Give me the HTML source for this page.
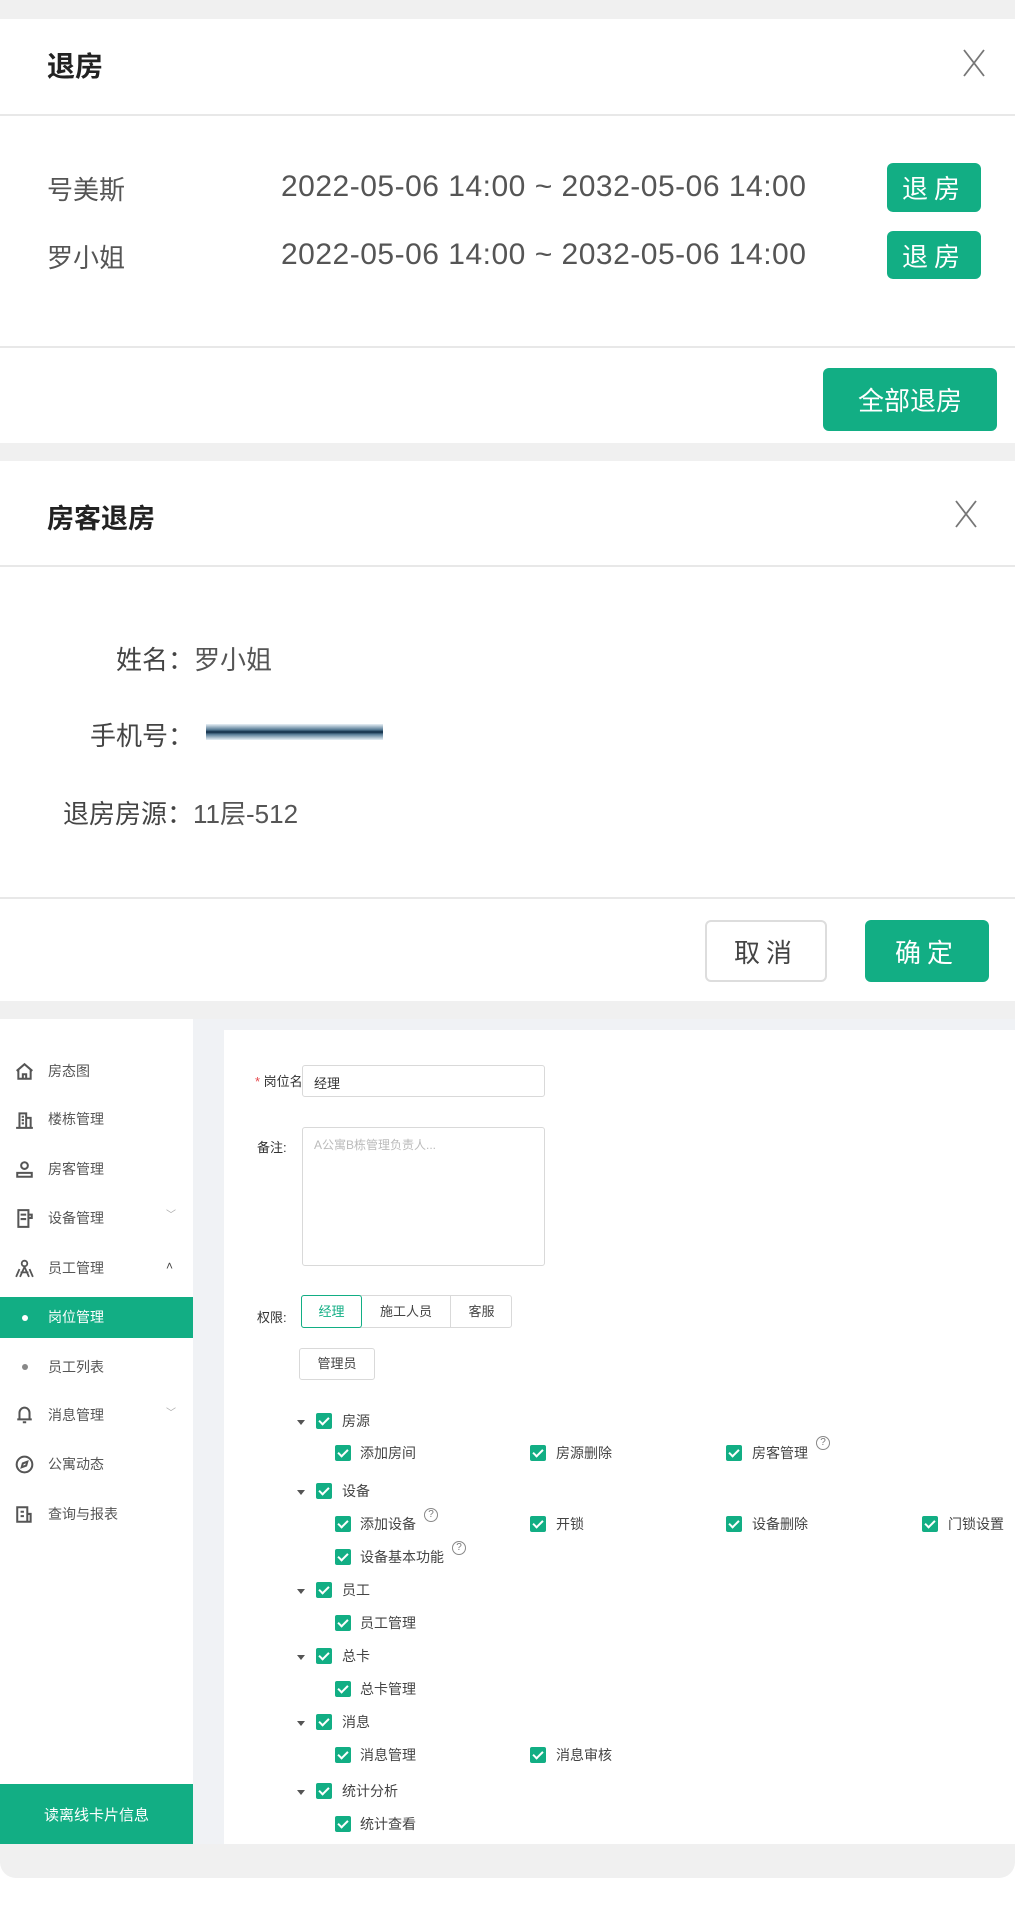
<!DOCTYPE html>
<html><head><meta charset="utf-8"><style>
*{margin:0;padding:0;box-sizing:border-box}
body{width:1015px;height:1920px;background:#fff;font-family:"Liberation Sans","Noto Sans CJK SC",sans-serif;position:relative;overflow:hidden;color:#333}
.a{position:absolute}
.g{background:#f0f0f0}
.btn{position:absolute;background:#12ae84;color:#fff;border-radius:6px;display:flex;align-items:center;justify-content:center}
.x{position:absolute;width:22px;height:28px}
.hl{position:absolute;left:0;width:1015px;height:2px;background:#e8e8e8}
.mi{position:absolute;left:48px;font-size:14px;color:#555;line-height:20px}
.ic{position:absolute;left:15px;width:19px;height:19px}
.cb{position:absolute;width:16px;height:16px;background:#12ae84;border-radius:2px}
.cb:after{content:"";position:absolute;left:5px;top:2px;width:4px;height:8px;border:solid #fff;border-width:0 2px 2px 0;transform:rotate(45deg)}
.lb{position:absolute;font-size:14px;color:#444;line-height:16px}
.tri{position:absolute;width:0;height:0;border-left:4px solid transparent;border-right:4px solid transparent;border-top:5px solid #555}
.q{position:absolute;width:14px;height:14px;border:1px solid #888;border-radius:50%;font-size:10px;color:#777;text-align:center;line-height:12px}
.d{position:absolute;left:281px;font-size:30px;color:#555;white-space:nowrap;letter-spacing:0.5px}
</style></head><body>
<div class="a g" style="left:0;top:0;width:1015px;height:19px"></div>
<div class="a" style="left:0;top:19px;width:1015px;height:424px;background:#fff;border-radius:14px 14px 0 0"></div>
<div class="a" style="left:47px;top:45px;font-size:28px;font-weight:bold;color:#222">退房</div>
<svg class="x" style="left:963px;top:49px" viewBox="0 0 22 28" stroke="#777" stroke-width="1.8"><path d="M1 1L21 27M21 1L1 27"/></svg>
<div class="hl" style="top:114px"></div>
<div class="a" style="left:47px;top:170px;font-size:26px;color:#555">号美斯</div>
<div class="d" style="top:170px">2022-05-06 14:00 ~ 2032-05-06 14:00</div>
<div class="btn" style="left:887px;top:163px;width:94px;height:49px;font-size:26px;letter-spacing:6px">退房</div>
<div class="a" style="left:47px;top:238px;font-size:26px;color:#555">罗小姐</div>
<div class="d" style="top:238px">2022-05-06 14:00 ~ 2032-05-06 14:00</div>
<div class="btn" style="left:887px;top:231px;width:94px;height:48px;font-size:26px;letter-spacing:6px">退房</div>
<div class="hl" style="top:346px"></div>
<div class="btn" style="left:823px;top:368px;width:174px;height:63px;font-size:26px">全部退房</div>
<div class="a g" style="left:0;top:443px;width:1015px;height:18px"></div>

<div class="a" style="left:47px;top:497px;font-size:27px;font-weight:bold;color:#222">房客退房</div>
<svg class="x" style="left:955px;top:500px" viewBox="0 0 22 28" stroke="#777" stroke-width="1.8"><path d="M1 1L21 27M21 1L1 27"/></svg>
<div class="hl" style="top:565px"></div>
<div class="a" style="left:116px;top:640px;font-size:26px;color:#444">姓名：<span style="color:#555">罗小姐</span></div>
<div class="a" style="left:90px;top:716px;font-size:26px;color:#444">手机号：</div>
<div class="a" style="left:206px;top:724px;width:177px;height:16px;background:linear-gradient(#e8f0f6,#5a7e98 35%,#0d2a44 50%,#5a7e98 65%,#e8f0f6)"></div>
<div class="a" style="left:63px;top:794px;font-size:26px;color:#444">退房房源：<span style="color:#555">11层-512</span></div>
<div class="hl" style="top:897px"></div>
<div class="a" style="left:705px;top:920px;width:122px;height:62px;border:2px solid #ddd;border-radius:6px;font-size:26px;color:#444;display:flex;align-items:center;justify-content:center;letter-spacing:6px">取消</div>
<div class="btn" style="left:865px;top:920px;width:124px;height:62px;font-size:26px;letter-spacing:6px">确定</div>
<div class="a g" style="left:0;top:1001px;width:1015px;height:18px"></div>

<div class="a" style="left:193px;top:1019px;width:822px;height:825px;background:#f0f2f5"></div>
<div class="a" style="left:0;top:1019px;width:193px;height:825px;background:#fff"></div>
<div class="a" style="left:224px;top:1030px;width:791px;height:814px;background:#fff"></div>

<svg class="ic" style="top:1062px" viewBox="0 0 17 17" fill="none" stroke="#555" stroke-width="1.8"><path d="M1.5 8L8.5 2 15.5 8M3 6.5v8.5h11V6.5M7 15v-4h3v4"/></svg>
<div class="mi" style="top:1061px">房态图</div>
<svg class="ic" style="top:1110px" viewBox="0 0 17 17" fill="none" stroke="#555" stroke-width="1.8"><path d="M1 16h15M4 16V3h6v13M10 7h4v9M6 6h2M6 9h2M6 12h2"/></svg>
<div class="mi" style="top:1109px">楼栋管理</div>
<svg class="ic" style="top:1160px" viewBox="0 0 17 17" fill="none" stroke="#555" stroke-width="1.8"><circle cx="8.5" cy="5" r="3"/><path d="M2 15v-3.5h13V15z"/></svg>
<div class="mi" style="top:1159px">房客管理</div>
<svg class="ic" style="top:1209px" viewBox="0 0 17 17" fill="none" stroke="#555" stroke-width="1.8"><path d="M3 1h9v15H3zM5 5h5M5 9h5M12 5h3v3h-3"/></svg>
<div class="mi" style="top:1208px">设备管理</div>
<div class="a" style="left:166px;top:1206px;font-size:10px;color:#aaa">﹀</div>
<svg class="ic" style="top:1259px" viewBox="0 0 17 17" fill="none" stroke="#555" stroke-width="1.6"><circle cx="8.5" cy="4" r="2.5"/><path d="M4 9l-3 7M13 9l3 7M8.5 7l-4 9M8.5 7l4 9M5 12h7"/></svg>
<div class="mi" style="top:1258px">员工管理</div>
<div class="a" style="left:166px;top:1259px;font-size:12px;color:#444">˄</div>
<div class="a" style="left:0;top:1297px;width:193px;height:41px;background:#12ae84"></div>
<div class="a" style="left:22px;top:1315px;width:6px;height:6px;border-radius:50%;background:#fff"></div>
<div class="mi" style="top:1307px;color:#fff">岗位管理</div>
<div class="a" style="left:22px;top:1364px;width:6px;height:6px;border-radius:50%;background:#888"></div>
<div class="mi" style="top:1357px">员工列表</div>
<svg class="ic" style="top:1406px" viewBox="0 0 17 17" fill="none" stroke="#555" stroke-width="1.8"><path d="M4 12V6a4.5 4.5 0 019 0v6M2 12h13M7 14.5h3"/></svg>
<div class="mi" style="top:1405px">消息管理</div>
<div class="a" style="left:166px;top:1404px;font-size:10px;color:#aaa">﹀</div>
<svg class="ic" style="top:1455px" viewBox="0 0 17 17" fill="none" stroke="#555" stroke-width="1.8"><circle cx="8.5" cy="8.5" r="7"/><path d="M11 6l-4 1.5L6 11l4-1.5z"/></svg>
<div class="mi" style="top:1454px">公寓动态</div>
<svg class="ic" style="top:1505px" viewBox="0 0 17 17" fill="none" stroke="#555" stroke-width="1.8"><path d="M2 2h9v13H2zM5 6h3M5 10h3M11 8h3v7h-3"/></svg>
<div class="mi" style="top:1504px">查询与报表</div>
<div class="a" style="left:0;top:1784px;width:193px;height:60px;background:#12ae84;color:#fff;font-size:15px;display:flex;align-items:center;justify-content:center">读离线卡片信息</div>
<div class="a g" style="left:0;top:1844px;width:1015px;height:34px;border-radius:0 0 16px 16px"></div>

<div class="a" style="left:255px;top:1071px;font-size:13px;color:#333"><span style="color:#e5484d">*</span> 岗位名</div>
<div class="a" style="left:302px;top:1065px;width:243px;height:32px;border:1px solid #d9d9d9;border-radius:3px;background:#fff;font-size:13px;color:#333;padding:7px 11px">经理</div>
<div class="a" style="left:257px;top:1137px;font-size:13px;color:#333">备注:</div>
<div class="a" style="left:302px;top:1127px;width:243px;height:139px;border:1px solid #d9d9d9;border-radius:3px;font-size:12px;color:#bbb;padding:8px 11px">A公寓B栋管理负责人...</div>
<div class="a" style="left:257px;top:1307px;font-size:13px;color:#333">权限:</div>
<div class="a" style="left:301px;top:1295px;width:211px;height:33px;border:1px solid #d9d9d9;border-radius:3px"></div>
<div class="a" style="left:301px;top:1295px;width:61px;height:33px;border:1px solid #12ae84;border-radius:3px;color:#12ae84;font-size:13px;text-align:center;line-height:31px">经理</div>
<div class="a" style="left:362px;top:1295px;width:89px;height:33px;border-right:1px solid #d9d9d9;font-size:13px;color:#444;text-align:center;line-height:33px">施工人员</div>
<div class="a" style="left:451px;top:1295px;width:61px;height:33px;font-size:13px;color:#444;text-align:center;line-height:33px">客服</div>
<div class="a" style="left:299px;top:1348px;width:76px;height:32px;border:1px solid #d9d9d9;border-radius:3px;font-size:13px;color:#444;text-align:center;line-height:30px">管理员</div>

<div class="tri" style="left:297px;top:1420px"></div><div class="cb" style="left:316px;top:1413px"></div><div class="lb" style="left:342px;top:1413px">房源</div>
<div class="cb" style="left:335px;top:1445px"></div><div class="lb" style="left:360px;top:1445px">添加房间</div>
<div class="cb" style="left:530px;top:1445px"></div><div class="lb" style="left:556px;top:1445px">房源删除</div>
<div class="cb" style="left:726px;top:1445px"></div><div class="lb" style="left:752px;top:1445px">房客管理</div><div class="q" style="left:816px;top:1436px">?</div>
<div class="tri" style="left:297px;top:1490px"></div><div class="cb" style="left:316px;top:1483px"></div><div class="lb" style="left:342px;top:1483px">设备</div>
<div class="cb" style="left:335px;top:1516px"></div><div class="lb" style="left:360px;top:1516px">添加设备</div><div class="q" style="left:424px;top:1508px">?</div>
<div class="cb" style="left:530px;top:1516px"></div><div class="lb" style="left:556px;top:1516px">开锁</div>
<div class="cb" style="left:726px;top:1516px"></div><div class="lb" style="left:752px;top:1516px">设备删除</div>
<div class="cb" style="left:922px;top:1516px"></div><div class="lb" style="left:948px;top:1516px">门锁设置</div>
<div class="cb" style="left:335px;top:1549px"></div><div class="lb" style="left:360px;top:1549px">设备基本功能</div><div class="q" style="left:452px;top:1541px">?</div>
<div class="tri" style="left:297px;top:1589px"></div><div class="cb" style="left:316px;top:1582px"></div><div class="lb" style="left:342px;top:1582px">员工</div>
<div class="cb" style="left:335px;top:1615px"></div><div class="lb" style="left:360px;top:1615px">员工管理</div>
<div class="tri" style="left:297px;top:1655px"></div><div class="cb" style="left:316px;top:1648px"></div><div class="lb" style="left:342px;top:1648px">总卡</div>
<div class="cb" style="left:335px;top:1681px"></div><div class="lb" style="left:360px;top:1681px">总卡管理</div>
<div class="tri" style="left:297px;top:1721px"></div><div class="cb" style="left:316px;top:1714px"></div><div class="lb" style="left:342px;top:1714px">消息</div>
<div class="cb" style="left:335px;top:1747px"></div><div class="lb" style="left:360px;top:1747px">消息管理</div>
<div class="cb" style="left:530px;top:1747px"></div><div class="lb" style="left:556px;top:1747px">消息审核</div>
<div class="tri" style="left:297px;top:1790px"></div><div class="cb" style="left:316px;top:1783px"></div><div class="lb" style="left:342px;top:1783px">统计分析</div>
<div class="cb" style="left:335px;top:1816px"></div><div class="lb" style="left:360px;top:1816px">统计查看</div>
</body></html>
